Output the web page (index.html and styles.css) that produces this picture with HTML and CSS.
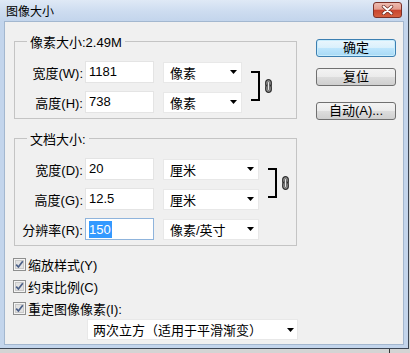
FILE: index.html
```html
<!DOCTYPE html>
<html lang="zh-CN">
<head>
<meta charset="utf-8">
<title>图像大小</title>
<link rel="stylesheet" href="styles.css">
</head>
<body>
<div class="window">
  <div class="titlebar">
    <span class="title">图像大小</span>
    <span class="close"><svg width="13" height="10" viewBox="0 0 13 10"><path d="M2.5 1.5 L10.5 8.5 M10.5 1.5 L2.5 8.5" stroke="#6b2a22" stroke-width="3.4" stroke-linecap="round"/><path d="M2.5 1.5 L10.5 8.5 M10.5 1.5 L2.5 8.5" stroke="#fff" stroke-width="2" stroke-linecap="round"/></svg></span>
  </div>
  <div class="client">
    <div class="left">
      <div class="group">
        <div class="legend">像素大小:2.49M</div>
        <div class="linked">
          <div class="rows">
            <div class="row"><span class="lbl">宽度(W):</span><div class="field">1181</div><div class="select w1"><span>像素</span><svg class="tri" width="7" height="4" viewBox="0 0 7 4"><polygon points="0,0 7,0 3.5,4" fill="#000"/></svg></div></div>
            <div class="row"><span class="lbl">高度(H):</span><div class="field">738</div><div class="select w1"><span>像素</span><svg class="tri" width="7" height="4" viewBox="0 0 7 4"><polygon points="0,0 7,0 3.5,4" fill="#000"/></svg></div></div>
          </div>
          <div class="link"><span class="bracket"></span><svg class="chain" width="7" height="14" viewBox="0 0 7 14"><rect x="0.7" y="0.7" width="5.6" height="7.6" rx="2.8" fill="#9a9a9a" stroke="#2e2e2e" stroke-width="1.2"/><rect x="0.7" y="5.7" width="5.6" height="7.6" rx="2.8" fill="#9a9a9a" stroke="#2e2e2e" stroke-width="1.2"/><rect x="2.5" y="2.6" width="2" height="8.8" rx="1" fill="#e6e6e6" stroke="#4a4a4a" stroke-width="0.7"/></svg></div>
        </div>
      </div>

      <div class="group g2">
        <div class="legend">文档大小:</div>
        <div class="linked">
          <div class="rows">
            <div class="row"><span class="lbl">宽度(D):</span><div class="field">20</div><div class="select w2"><span>厘米</span><svg class="tri" width="7" height="4" viewBox="0 0 7 4"><polygon points="0,0 7,0 3.5,4" fill="#000"/></svg></div></div>
            <div class="row"><span class="lbl">高度(G):</span><div class="field">12.5</div><div class="select w2"><span>厘米</span><svg class="tri" width="7" height="4" viewBox="0 0 7 4"><polygon points="0,0 7,0 3.5,4" fill="#000"/></svg></div></div>
          </div>
          <div class="link"><span class="bracket"></span><svg class="chain" width="7" height="14" viewBox="0 0 7 14"><rect x="0.7" y="0.7" width="5.6" height="7.6" rx="2.8" fill="#9a9a9a" stroke="#2e2e2e" stroke-width="1.2"/><rect x="0.7" y="5.7" width="5.6" height="7.6" rx="2.8" fill="#9a9a9a" stroke="#2e2e2e" stroke-width="1.2"/><rect x="2.5" y="2.6" width="2" height="8.8" rx="1" fill="#e6e6e6" stroke="#4a4a4a" stroke-width="0.7"/></svg></div>
        </div>
        <div class="row extra"><span class="lbl">分辨率(R):</span><div class="field focus"><span class="sel">150</span></div><div class="select w2"><span>像素/英寸</span><svg class="tri" width="7" height="4" viewBox="0 0 7 4"><polygon points="0,0 7,0 3.5,4" fill="#000"/></svg></div></div>
      </div>

      <div class="checks">
        <div class="check"><svg class="cb" width="13" height="13" viewBox="0 0 13 13"><rect x="0.5" y="0.5" width="12" height="12" fill="#f4f4f4" stroke="#8e8f8f"/><rect x="2.5" y="2.5" width="8" height="8" fill="#e2e2e2" stroke="#c9c9c9"/><path d="M3.2 6.6 L5.4 9 L9.8 3.2" fill="none" stroke="#4a5f88" stroke-width="1.7"/></svg><span>缩放样式(Y)</span></div>
        <div class="check"><svg class="cb" width="13" height="13" viewBox="0 0 13 13"><rect x="0.5" y="0.5" width="12" height="12" fill="#f4f4f4" stroke="#8e8f8f"/><rect x="2.5" y="2.5" width="8" height="8" fill="#e2e2e2" stroke="#c9c9c9"/><path d="M3.2 6.6 L5.4 9 L9.8 3.2" fill="none" stroke="#4a5f88" stroke-width="1.7"/></svg><span>约束比例(C)</span></div>
        <div class="check"><svg class="cb" width="13" height="13" viewBox="0 0 13 13"><rect x="0.5" y="0.5" width="12" height="12" fill="#f4f4f4" stroke="#8e8f8f"/><rect x="2.5" y="2.5" width="8" height="8" fill="#e2e2e2" stroke="#c9c9c9"/><path d="M3.2 6.6 L5.4 9 L9.8 3.2" fill="none" stroke="#4a5f88" stroke-width="1.7"/></svg><span>重定图像像素(I):</span></div>
      </div>
      <div class="select wide"><span>两次立方（适用于平滑渐变）</span><svg class="tri" width="7" height="4" viewBox="0 0 7 4"><polygon points="0,0 7,0 3.5,4" fill="#000"/></svg></div>
    </div>

    <div class="buttons">
      <div class="btn default">确定</div>
      <div class="btn reset">复位</div>
      <div class="btn auto">自动(A)...</div>
    </div>
  </div>
</div>
<div class="desk-edge"></div>
</body>
</html>
```

FILE: styles.css
```css
html, body {
  margin: 0;
  padding: 0;
}
body {
  width: 410px;
  height: 353px;
  overflow: hidden;
  background: #d4d4d4;
  font-family: "Liberation Sans", "Noto Sans CJK SC", sans-serif;
  font-size: 13px;
  color: #000;
}
.window {
  width: 409px;
  height: 349px;
  box-sizing: border-box;
  border-right: 1px solid #3d4654;
  border-bottom: 1px solid #3d4654;
  background: #c3d5ec;
  display: flex;
  flex-direction: column;
}
.titlebar {
  height: 21px;
  flex: none;
  display: flex;
  justify-content: space-between;
  align-items: flex-start;
  background: linear-gradient(#dfe9f6, #cddcf0 55%, #c3d5ec);
}
.title {
  font-size: 12px;
  line-height: 14px;
  margin: 5px 0 0 6px;
}
.close {
  margin: 2px 6px 0 0;
  width: 29px;
  height: 16px;
  box-sizing: border-box;
  border: 1px solid #7b3128;
  border-radius: 3px;
  background: linear-gradient(#eebbb0, #e29d8f 45%, #c8442d 50%, #d6603f 100%);
  display: flex;
  align-items: center;
  justify-content: center;
}
.client {
  flex: 1;
  margin: 0 4px 3px 4px;
  border: 1px solid #a3b7cf;
  background: #f0f0f0;
  display: flex;
  padding: 17px 7px 0 9px;
}
.left {
  width: 283px;
  padding-top: 2px;
}
.group {
  border: 1px solid #c4c4c4;
  padding: 0 0 5px 0;
}
.g2 {
  margin-top: 19px;
}
.legend {
  width: fit-content;
  height: 16px;
  line-height: 16px;
  margin: -7px 0 0 12px;
  padding: 0 3px;
  background: #f0f0f0;
  white-space: nowrap;
}
.linked {
  display: flex;
  align-items: center;
  margin-top: 10px;
}
.rows {
  display: flex;
  flex-direction: column;
  gap: 8px;
}
.row {
  display: flex;
  align-items: center;
  height: 22px;
}
.row.extra {
  margin-top: 8px;
}
.lbl {
  width: 68px;
  margin-right: 2px;
  text-align: right;
  white-space: nowrap;
}
.field {
  width: 69px;
  height: 22px;
  box-sizing: border-box;
  border: 1px solid #e4e4e4;
  background: #fff;
  padding-left: 3px;
  line-height: 20px;
}
.field.focus {
  border-color: #8fb4dc;
  display: flex;
  align-items: center;
}
.sel {
  display: inline-block;
  background: #3399ff;
  color: #fff;
  line-height: 17px;
  height: 17px;
  padding-right: 1px;
}
.select {
  margin-left: 9px;
  height: 21px;
  box-sizing: border-box;
  background: #fff;
  border: 1px solid #e8e8e8;
  display: flex;
  align-items: center;
  justify-content: space-between;
  padding: 0 4px 0 6px;
  white-space: nowrap;
}
.w1 {
  width: 79px;
}
.w2 {
  width: 96px;
}
.tri {
  display: block;
  flex: none;
}
.link {
  display: flex;
  align-items: center;
  gap: 5px;
  margin: -3px 0 0 9px;
}
.bracket {
  display: block;
  width: 7px;
  height: 26px;
  border: 2px solid #000;
  border-left: 0;
}
.chain {
  display: block;
}
.checks {
  margin-top: 7px;
}
.check {
  height: 22px;
  display: flex;
  align-items: center;
  gap: 2px;
  margin-left: -1px;
}
.cb {
  display: block;
  flex: none;
}
.select.wide {
  margin-left: 73px;
  width: 211px;
  padding: 0 3px 0 5px;
}
.buttons {
  margin-left: auto;
  width: 80px;
  display: flex;
  flex-direction: column;
}
.btn {
  height: 18px;
  box-sizing: border-box;
  border: 1px solid #707070;
  border-radius: 3px;
  background: linear-gradient(#f3f3f3, #ebebeb 50%, #dddddd 50%, #cfcfcf);
  text-align: center;
  line-height: 16px;
  white-space: nowrap;
}
.btn.default {
  border-color: #3c7fb1;
  background: linear-gradient(#eaf6fd, #d9f0fc 50%, #bee6fd 50%, #a7d9f5);
  box-shadow: inset 0 0 0 1px #c8ecfc;
}
.btn.reset {
  margin-top: 11px;
}
.btn.auto {
  margin-top: 16px;
}
.desk-edge {
  margin-left: 389px;
  width: 1px;
  height: 4px;
  background: #333;
}
```
